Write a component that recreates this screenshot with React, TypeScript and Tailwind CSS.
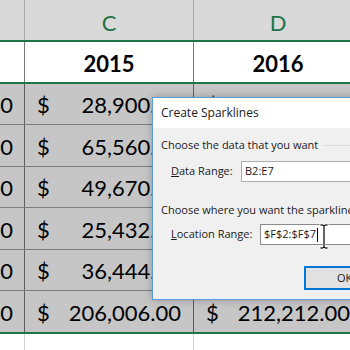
import React from "react";

type Row = { h: string; b: string; c: string; d: string; last?: boolean };

const rows: Row[] = [
  { h: "h-[41px]", b: "31,500.00", c: "28,900.00", d: "30,150.00" },
  { h: "h-[42px]", b: "60,100.00", c: "65,560.00", d: "64,812.00" },
  { h: "h-[41px]", b: "47,250.00", c: "49,670.00", d: "51,340.00" },
  { h: "h-[42px]", b: "22,800.00", c: "25,432.00", d: "27,910.00" },
  { h: "h-[41px]", b: "35,000.00", c: "36,444.00", d: "38,000.00" },
  { h: "h-[43px]", b: "196,650.00", c: "206,006.00", d: "212,212.00", last: true },
];

function Money({ value }: { value: string }) {
  return (
    <div className="flex h-full items-end justify-between pl-[12px] pr-[12px] pb-[7px] leading-[24px] whitespace-nowrap">
      <span>$</span>
      <span>{value}</span>
    </div>
  );
}

export default function App() {
  return (
    <div className="relative w-[350px] h-[350px] overflow-hidden bg-white font-['Lato',sans-serif] text-[22px] text-black">
      {/* column headers */}
      <div className="flex h-[42px] bg-[#d9d9d9] border-b-2 border-[#217346] text-[#217346]">
        <div className="w-[25px] shrink-0 border-r border-[#ababab]" />
        <div className="w-[169px] shrink-0 border-r border-[#ababab] flex items-center justify-center pt-[5px]">
          C
        </div>
        <div className="w-[168px] shrink-0 flex items-center justify-center pt-[5px]">D</div>
      </div>

      {/* row 1 */}
      <div className="flex h-[42px] border-b-2 border-[#217346] font-bold">
        <div className="w-[25px] shrink-0 border-r border-[#7a7a7a]" />
        <div className="w-[169px] shrink-0 border-r border-[#7a7a7a] flex items-end justify-center pb-[6px] leading-[24px]">
          2015
        </div>
        <div className="w-[168px] shrink-0 flex items-end justify-center pb-[6px] leading-[24px]">2016</div>
      </div>

      {/* selected data */}
      {rows.map((r) => (
        <div
          key={r.c}
          className={`flex bg-[#c6c6c6] ${r.h} ${
            r.last ? "border-b-2 border-[#217346]" : "border-b border-[#7d7d7d]"
          }`}
        >
          <div className="w-[25px] shrink-0 border-r border-[#5e5e5e] overflow-hidden flex items-end justify-end pr-[11px] pb-[7px] leading-[24px] whitespace-nowrap">
            {r.b}
          </div>
          <div className="w-[169px] shrink-0 border-r border-[#5e5e5e]">
            <Money value={r.c} />
          </div>
          <div className="w-[168px] shrink-0">
            <Money value={r.d} />
          </div>
        </div>
      ))}

      {/* empty rows */}
      <div className="flex h-[40px]">
        <div className="w-[25px] shrink-0 border-r border-[#d4d4d4]" />
        <div className="w-[169px] shrink-0 border-r border-[#d4d4d4]" />
      </div>

      {/* dialog */}
      <div className="absolute left-[152px] top-[97px] w-[240px] h-[203px] border border-[#5a9ad6] bg-[#f0f0f0] font-['Open_Sans',sans-serif] text-[11px] text-[#1a1a1a] shadow-[0_0_8px_rgba(0,0,0,0.25)]">
        <div className="h-[30px] bg-white flex items-center pl-[8px] text-[12px] leading-none">
          Create Sparklines
        </div>
        <div className="relative pl-[8px]">
          <div className="flex items-center h-[16px] mt-[9px]">
            <span className="whitespace-nowrap">Choose the data that you want</span>
            <div className="flex-1 ml-[5px] h-px bg-[#dcdcdc]" />
          </div>
          <div className="flex items-center h-[21px] mt-[8px] pl-[10px]">
            <span className="w-[70px] whitespace-nowrap">
              <span className="underline">D</span>ata Range:
            </span>
            <div className="flex-1 h-full bg-white border border-[#adadad] flex items-center pl-[3px]">
              B2:E7
            </div>
          </div>
          <div className="flex items-center h-[16px] mt-[20px] whitespace-nowrap">
            Choose where you want the sparklines to be placed
          </div>
          <div className="flex items-center h-[21px] mt-[6px] pl-[10px]">
            <span className="w-[89px] whitespace-nowrap">
              <span className="underline">L</span>ocation Range:
            </span>
            <div className="flex-1 h-full bg-white border border-[#8a8a8a] flex items-center pl-[3px]">
              <span>$F$2:$F$7</span>
              <span className="ml-px w-px h-[14px] bg-black" />
            </div>
          </div>
          <div className="flex mt-[21px] pl-[143px]">
            <div className="w-[80px] h-[24px] bg-[#e1e1e1] border-2 border-[#0078d7] flex items-center pl-[31px]">
              OK
            </div>
          </div>

          {/* I-beam mouse cursor */}
          <svg
            className="absolute left-[166px] top-[86px]"
            width="10"
            height="27"
            viewBox="0 0 10 27"
          >
            <path
              d="M1 1 H4 L5 2 L6 1 H9 V3 H6 V24 H9 V26 H6 L5 25 L4 26 H1 V24 H4 V3 H1 Z"
              fill="#000"
              stroke="#fff"
              strokeWidth="0.8"
            />
          </svg>
        </div>
      </div>
    </div>
  );
}
